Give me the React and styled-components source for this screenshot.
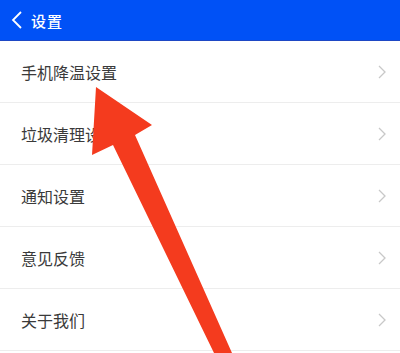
import React from "react";
import styled, { createGlobalStyle } from "styled-components";

const GlobalStyle = createGlobalStyle`
  html, body {
    margin: 0;
    padding: 0;
    background: #ffffff;
    font-family: "Noto Sans CJK SC", "Noto Sans", sans-serif;
  }
`;

const Page = styled.div`
  position: relative;
  width: 400px;
  height: 353px;
  overflow: hidden;
  background: #ffffff;
`;

const Header = styled.header`
  display: flex;
  align-items: center;
  height: 40px;
  padding-left: 11px;
  background: #0051f6;
  border-bottom: 1px solid #1e48c4;
  color: #ffffff;
`;

const Back = styled.svg`
  width: 12px;
  height: 20px;
  margin-right: 8px;
`;

const Title = styled.h1`
  margin: 0;
  font-size: 15px;
  font-weight: 500;
  letter-spacing: 1px;
`;

const List = styled.ul`
  margin: 0;
  padding: 0;
  list-style: none;
`;

const Row = styled.li`
  display: flex;
  align-items: center;
  justify-content: space-between;
  height: 61px;
  padding: 0 13px 0 21px;
  border-bottom: 1px solid #ededed;
`;

const Label = styled.span`
  font-size: 16px;
  color: #3a3a3a;
`;

const Chevron = styled.svg`
  width: 10px;
  height: 14px;
`;

const Arrow = styled.svg`
  position: absolute;
  left: 0;
  top: 0;
  width: 400px;
  height: 353px;
  pointer-events: none;
`;

const items = ["手机降温设置", "垃圾清理设置", "通知设置", "意见反馈", "关于我们"];

export default function App() {
  return (
    <Page>
      <GlobalStyle />
      <Header>
        <Back viewBox="0 0 12 20">
          <path d="M10 2 L2 10 L10 18" fill="none" stroke="#ffffff" strokeWidth="1.8" />
        </Back>
        <Title>设置</Title>
      </Header>
      <List>
        {items.map((t) => (
          <Row key={t}>
            <Label>{t}</Label>
            <Chevron viewBox="0 0 10 14">
              <path d="M2 1 L8 7 L2 13" fill="none" stroke="#c8c8c8" strokeWidth="1.3" />
            </Chevron>
          </Row>
        ))}
      </List>
      <Arrow viewBox="0 0 400 353">
        <polygon
          points="96,87 152,125 135,135 232,353 214,353 113,145 92,155"
          fill="#f43b1e"
        />
      </Arrow>
    </Page>
  );
}
